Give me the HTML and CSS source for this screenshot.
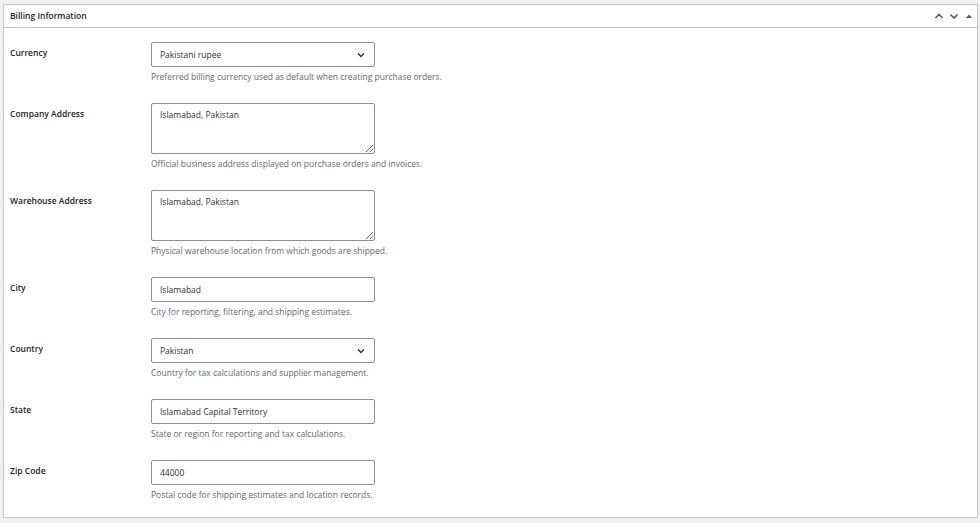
FILE: index.html
```html
<!DOCTYPE html>
<html lang="en">
<head>
<meta charset="utf-8">
<title>Billing Information</title>
<link rel="stylesheet" href="styles.css">
</head>
<body>
<div class="postbox">
  <div class="postbox-header">
    <h2 class="postbox-title">Billing Information</h2>
    <div class="handle-actions">
      <button class="handle-btn" type="button" aria-label="Move up">
        <svg width="10" height="10" viewBox="0 0 10 10"><path d="M1.5 7 L5 3.5 L8.5 7" fill="none" stroke="#50575e" stroke-width="1.6"/></svg>
      </button>
      <button class="handle-btn" type="button" aria-label="Move down">
        <svg width="10" height="10" viewBox="0 0 10 10"><path d="M1.5 3.5 L5 7 L8.5 3.5" fill="none" stroke="#50575e" stroke-width="1.6"/></svg>
      </button>
      <button class="handle-btn toggle" type="button" aria-label="Toggle panel">
        <svg width="8" height="8" viewBox="0 0 8 8"><path d="M1 6 L4 2.5 L7 6 Z" fill="#50575e"/></svg>
      </button>
    </div>
  </div>
  <div class="inside">
    <div class="field-row">
      <label class="field-label">Currency</label>
      <div class="field-control">
        <div class="select-box"><span>Pakistani rupee</span><svg class="chev" width="8" height="6" viewBox="0 0 8 6"><path d="M1 1.5 L4 4.5 L7 1.5" fill="none" stroke="#2c3338" stroke-width="1.4"/></svg></div>
        <p class="description">Preferred billing currency used as default when creating purchase orders.</p>
      </div>
    </div>
    <div class="field-row">
      <label class="field-label">Company Address</label>
      <div class="field-control">
        <textarea class="text-area">Islamabad, Pakistan</textarea>
        <p class="description">Official business address displayed on purchase orders and invoices.</p>
      </div>
    </div>
    <div class="field-row">
      <label class="field-label">Warehouse Address</label>
      <div class="field-control">
        <textarea class="text-area">Islamabad, Pakistan</textarea>
        <p class="description">Physical warehouse location from which goods are shipped.</p>
      </div>
    </div>
    <div class="field-row">
      <label class="field-label">City</label>
      <div class="field-control">
        <input class="text-input" type="text" value="Islamabad">
        <p class="description">City for reporting, filtering, and shipping estimates.</p>
      </div>
    </div>
    <div class="field-row">
      <label class="field-label">Country</label>
      <div class="field-control">
        <div class="select-box"><span>Pakistan</span><svg class="chev" width="8" height="6" viewBox="0 0 8 6"><path d="M1 1.5 L4 4.5 L7 1.5" fill="none" stroke="#2c3338" stroke-width="1.4"/></svg></div>
        <p class="description">Country for tax calculations and supplier management.</p>
      </div>
    </div>
    <div class="field-row">
      <label class="field-label">State</label>
      <div class="field-control">
        <input class="text-input" type="text" value="Islamabad Capital Territory">
        <p class="description">State or region for reporting and tax calculations.</p>
      </div>
    </div>
    <div class="field-row">
      <label class="field-label">Zip Code</label>
      <div class="field-control">
        <input class="text-input" type="text" value="44000">
        <p class="description">Postal code for shipping estimates and location records.</p>
      </div>
    </div>
  </div>
</div>
</body>
</html>
```
FILE: styles.css
```css
html, body {
  margin: 0;
  padding: 0;
  background: #f0f0f1;
}

body {
  padding: 4px 2px 0 3px;
  font-family: "Open Sans", "Noto Sans", sans-serif;
  color: #1d2327;
  font-size: 8.5px;
}

.postbox {
  background: #fff;
  border: 1px solid #c3c4c7;
  height: 514px;
  box-sizing: border-box;
}

.postbox-header {
  display: flex;
  align-items: center;
  justify-content: space-between;
  height: 22px;
  border-bottom: 1px solid #c3c4c7;
  padding: 0 2px 0 6px;
}

.postbox-title {
  margin: 0;
  font-size: 8.5px;
  line-height: 20px;
  font-weight: 600;
  color: #1d2327;
}

.handle-actions {
  display: flex;
  align-items: center;
  gap: 3px;
}

.handle-btn {
  border: 0;
  background: none;
  padding: 0;
  width: 12px;
  height: 14px;
  display: flex;
  align-items: center;
  justify-content: center;
}

.inside {
  padding: 4px 6px 6px 6px;
}

.field-row {
  display: flex;
  padding: 10px 0 10px;
}

.field-label {
  width: 141px;
  flex: none;
  padding-top: 5px;
  line-height: 12px;
  font-weight: 600;
  font-size: 8.5px;
  color: #1d2327;
}

.field-control {
  display: flex;
  flex-direction: column;
}

.select-box,
.text-input,
.text-area {
  box-sizing: border-box;
  width: 224px;
  border: 1px solid #8c8f94;
  border-radius: 2px;
  background: #fff;
  font-family: inherit;
  font-size: 8.5px;
  color: #2c3338;
  margin: 0;
}

.select-box {
  height: 25px;
  display: flex;
  align-items: center;
  justify-content: space-between;
  padding: 0 9px 0 8px;
}

.text-input {
  height: 25px;
  padding: 0 8px;
  outline: none;
}

.text-area {
  height: 51px;
  padding: 5px 8px;
  line-height: 12px;
  resize: both;
  outline: none;
  display: block;
}

.description {
  margin: 4px 0 0;
  line-height: 12px;
  font-size: 8.5px;
  color: #646970;
}
```
